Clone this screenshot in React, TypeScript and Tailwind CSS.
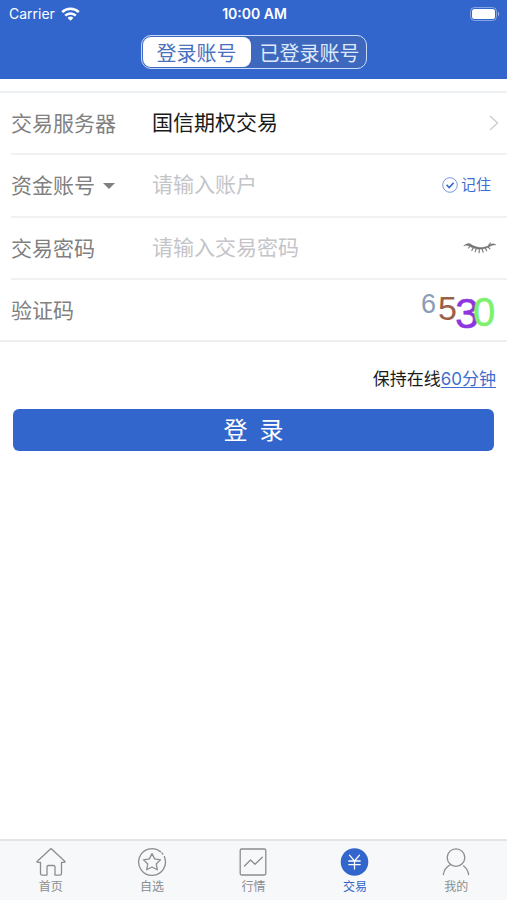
import { useState, type ReactNode } from 'react';

const label = 'w-[141px] shrink-0 pt-0.5 text-[21px] leading-7 text-[#808080]';
const field =
  'min-w-0 flex-1 bg-transparent text-[21px] leading-7 text-[#1a1a1a] outline-none placeholder:text-[#c4c4c9]';
const row = 'ml-[11px] flex items-center border-b-2 border-[#f1f1f2]';

function StatusBar() {
  return (
    <div className="grid h-7 grid-cols-3 items-center pl-[9px] pr-[7px] font-['Inter','Liberation_Sans',sans-serif] text-[14px] leading-5">
      <div className="flex items-center gap-1.5">
        <span>Carrier</span>
        <svg className="h-[14px] w-[19px]" viewBox="0 0 19 14" aria-hidden="true" fill="none" stroke="white" strokeWidth="2.6">
          <path d="M1.2 5.1a12 12 0 0 1 16.6 0" />
          <path d="M4.2 8.6a7.6 7.6 0 0 1 10.6 0" />
          <path d="M9.5 13.8 6.6 10.9a4.1 4.1 0 0 1 5.8 0z" fill="white" stroke="none" />
        </svg>
      </div>
      <span className="text-center font-semibold">10:00 AM</span>
      <svg className="h-[14px] w-[30px] justify-self-end" viewBox="0 0 30 14" aria-hidden="true">
        <rect x="0.5" y="0.5" width="26" height="13" rx="4" fill="none" stroke="white" strokeOpacity="0.4" />
        <rect x="2" y="2" width="23" height="10" rx="2.5" fill="white" />
        <path d="M28 4.8c1.6.6 1.6 3.8 0 4.4z" fill="white" fillOpacity="0.5" />
      </svg>
    </div>
  );
}

function Captcha() {
  return (
    <button type="button" aria-label="刷新验证码" className="mr-[11px]">
      <svg className="h-[42px] w-[76px] overflow-visible" viewBox="0 0 76 42" fontFamily="'Liberation Sans', sans-serif">
        <text x="1" y="24" fontSize="27" fill="#8a9db5">6</text>
        <text x="18" y="31" fontSize="34" fill="#9a6048">5</text>
        <text x="35" y="39" fontSize="43" fill="#8d35de" stroke="#8d35de" strokeWidth="0.5">3</text>
        <text x="53" y="37" fontSize="40" fill="#7cf26c" stroke="#7cf26c" strokeWidth="0.5">0</text>
      </svg>
    </button>
  );
}

function Icon({ children }: { children: ReactNode }) {
  return (
    <svg className="size-[30px]" viewBox="0 0 30 30" fill="none" stroke="currentColor" strokeWidth="1.3" strokeLinejoin="round" strokeLinecap="round" aria-hidden="true">
      {children}
    </svg>
  );
}

const tabs = [
  {
    name: '首页',
    icon: <path d="M15 1.6 1.3 14.2c-.5.6-.3 1.1.4 1.1h2.8V26.5c0 1 .7 1.6 1.6 1.6H11v-8c0-1 .6-1.6 1.5-1.6h5c.9 0 1.5.6 1.5 1.6v8h4.9c.9 0 1.6-.6 1.6-1.6V15.3h2.8c.7 0 .9-.5.4-1.1z" />,
  },
  {
    name: '自选',
    icon: (
      <>
        <path d="M27.3 9.6A13.4 13.4 0 1 1 23.6 4.7M25 6l.9 1.1" />
        <path d="m15 6.6 2.6 5.3 5.9.9-4.2 4.1 1 5.9-5.3-2.8-5.3 2.8 1-5.9-4.2-4.1 5.9-.9z" />
      </>
    ),
  },
  {
    name: '行情',
    icon: (
      <>
        <rect x="2.2" y="2" width="25.6" height="26" rx="1.5" />
        <path d="m6.5 19 6-6 4.5 4.2 7.3-7" />
      </>
    ),
  },
  {
    name: '交易',
    icon: (
      <>
        <circle cx="14.5" cy="15" r="13.8" fill="currentColor" stroke="none" />
        <path d="m9.5 8.2 5 5.8 5-5.8M8.8 14h11.4M8.8 17.6h11.4M14.5 14v8" stroke="white" />
      </>
    ),
  },
  {
    name: '我的',
    icon: (
      <>
        <circle cx="15" cy="10.6" r="8.8" />
        <path d="M9 18c-3.8 2-6 5-6.6 9.5M22.6 19c2.6 1.8 4.3 4.5 5 8.5" />
      </>
    ),
  },
];

export default function App() {
  const [mode, setMode] = useState(0);
  const [tab, setTab] = useState(3);
  const [shown, setShown] = useState(false);

  return (
    <div className="flex min-h-screen flex-col bg-white font-['Liberation_Sans','Noto_Sans_CJK_SC',sans-serif] text-[#1a1a1a]">
      <header className="flex h-[79px] flex-col bg-[#3266cc] text-white">
        <StatusBar />
        <div className="mt-[7px] flex h-[34px] w-[226px] self-center rounded-[10px] border border-[#c9dbfa] bg-[#3d68bd] p-px text-[20px] leading-7">
          {['登录账号', '已登录账号'].map((name, i) => (
            <button
              key={name}
              type="button"
              aria-pressed={mode === i}
              onClick={() => setMode(i)}
              className={`flex items-center justify-center rounded-lg pt-[3px] ${i === 0 ? 'w-[108px]' : 'flex-1 pl-1'} ${
                mode === i ? 'bg-white text-[#4a70c0]' : 'text-[#dfe9fc]'
              }`}
            >
              {name}
            </button>
          ))}
        </div>
      </header>

      <main className="flex-1 pt-3">
        <form onSubmit={(e) => e.preventDefault()}>
          <div className="grid h-[251px] grid-cols-1 grid-rows-4 border-t-2 border-[#edf1f4]">
            <button type="button" className={`${row} text-left`}>
              <span className={label}>交易服务器</span>
              <span className="flex-1 text-[21px] leading-7">国信期权交易</span>
              <svg className="mr-2 h-4 w-[10px]" viewBox="0 0 10 16" fill="none" stroke="#cfcfd2" strokeWidth="1.5" aria-hidden="true">
                <path d="m1 1 7.5 7L1 15" />
              </svg>
            </button>
            <div className={row}>
              <button type="button" aria-label="资金账号" className={`${label} flex items-center gap-2`}>
                资金账号
                <svg className="h-1.5 w-3" viewBox="0 0 12 6" fill="#808080" aria-hidden="true">
                  <path d="M0 0h12L6 6z" />
                </svg>
              </button>
              <input className={field} aria-label="资金账号" placeholder="请输入账户" />
              <label className="mr-4 flex items-center gap-[3px] text-[15px] leading-5 text-[#3f6fce]">
                <input type="checkbox" defaultChecked className="peer sr-only" />
                <svg className="size-4 peer-checked:[&>path]:opacity-100 [&>path]:opacity-0" viewBox="0 0 16 16" fill="none" stroke="currentColor" aria-hidden="true">
                  <circle cx="8" cy="8" r="7.3" strokeOpacity="0.7" />
                  <path d="m4.6 7.8 2.6 2.7 4.4-4.6" strokeWidth="1.7" />
                </svg>
                记住
              </label>
            </div>
            <div className={row}>
              <label htmlFor="password" className={label}>交易密码</label>
              <input id="password" type={shown ? 'text' : 'password'} className={field} placeholder="请输入交易密码" />
              <button type="button" aria-label="显示密码" onClick={() => setShown(!shown)} className="mr-2.5">
                <svg className="h-3 w-[34px]" viewBox="0 0 34 12" fill="none" stroke="#737373" strokeLinecap="round" aria-hidden="true">
                  <path d="M1 3.8c2-2 4.2-2.8 6.3-1.8 6.2 4.3 13.8 4.8 20.2.6 1.8-1.2 3.5-.8 5.5.2-3-.1-4.6.8-6.7 2C20 8.3 12 8 5.8 3.8 4.2 2.8 2.8 3.1 1 3.8z" fill="#737373" strokeWidth="0.4" />
                  <path d="M6.8 4.5 5.5 6M10 6.2 8.8 8.5M13 7.2 12.2 9.8M16.3 7.6l-.2 3M19.3 7.3l.8 2.8M22.5 6.5l1.2 2.3M25.5 5.3 27 7M25.8 3.2 27.5 1" strokeWidth="1.1" />
                </svg>
              </button>
            </div>
            <div className="flex items-center border-b-2 border-[#edeeef] pl-[11px]">
              <label htmlFor="captcha" className={label}>验证码</label>
              <input id="captcha" className={field} />
              <Captcha />
            </div>
          </div>

          <p className="mt-[25px] pr-[11px] text-right font-['Inter','Noto_Sans_CJK_SC',sans-serif] text-[17px] leading-6">
            保持在线
            <a href="#duration" className="text-[#3f6fce] underline underline-offset-2">60分钟</a>
          </p>
          <div className="mt-[18px] px-[13px]">
            <button type="submit" className="flex h-[42px] w-full items-center justify-center gap-3 rounded-md bg-[#3266cc] pt-0.5 text-[24px] leading-8 text-white">
              <span>登</span>
              <span>录</span>
            </button>
          </div>
        </form>
      </main>

      <nav className="grid h-[61px] grid-cols-5 border-t-2 border-[#e3e4e6] bg-[#f6f8fa]">
        {tabs.map((t, i) => (
          <button
            key={t.name}
            type="button"
            aria-current={tab === i ? 'page' : undefined}
            onClick={() => setTab(i)}
            className={`flex flex-col items-center gap-px pt-1.5 text-[12px] leading-[18px] ${tab === i ? 'text-[#3266cc]' : 'text-[#8b8d90]'}`}
          >
            <Icon>{t.icon}</Icon>
            {t.name}
          </button>
        ))}
      </nav>
    </div>
  );
}
